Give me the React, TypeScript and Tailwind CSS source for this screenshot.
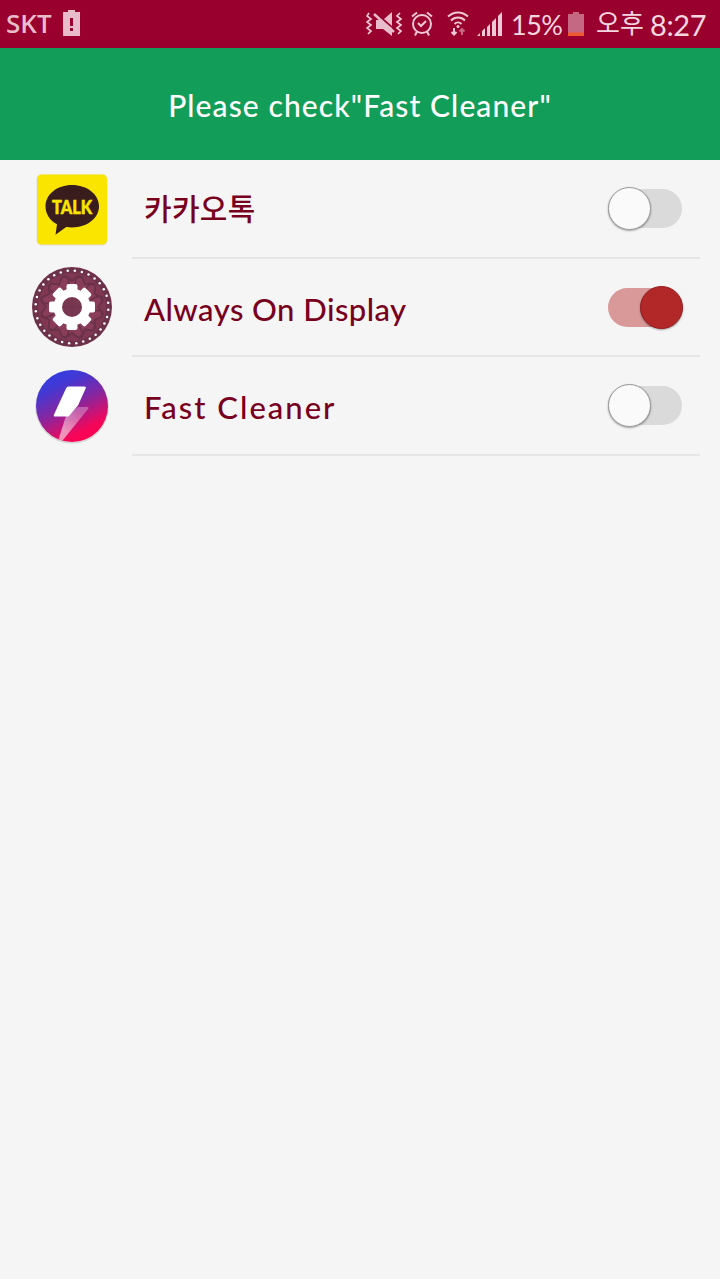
import React from 'react';

interface AppItem {
  name: string;
  icon: React.ReactNode;
  enabled: boolean;
  rowClass: string;
  nameClass: string;
}

const TalkIcon = () => (
  <svg width="80" height="80" viewBox="0 0 80 80">
    <rect x="4.5" y="5.5" width="71" height="71" rx="5" fill="#dedede" />
    <rect x="5" y="5.5" width="70" height="70" rx="4.5" fill="#fae500" />
    <path d="M40 16c15 0 27 9.300 27 21.300S55 58.500 40 58.500c-2 0-4-.2-5.800-.5L23.500 65.800 25 55.300C17.800 51.500 13.500 45 13.500 37.300 13.500 25.300 25 16 40 16z" fill="#391d1d" />
    <text x="40" y="44.500" textAnchor="middle" textLength="40" lengthAdjust="spacingAndGlyphs" fill="#fae500" stroke="#fae500" strokeWidth=".5" fontSize="18" className="font-['Lato',sans-serif] font-black">TALK</text>
  </svg>
);

const GearIcon = () => {
  const dots = Array.from({ length: 32 }, (_, i) => ((i + 0.4) * Math.PI) / 16);
  const teeth = [0, 45, 90, 135, 180, 225, 270, 315];
  const petals = [0, 30, 60, 90, 120, 150, 180, 210, 240, 270, 300, 330];
  return (
    <svg width="80" height="80" viewBox="0 0 80 80">
      <circle cx="40" cy="40" r="40" fill="#6d3249" />
      <circle cx="40" cy="40" r="34" fill="#803852" />
      {petals.map((a) => (
        <path key={a} d="M40 14l-7-5-4 4 3 7 8 5 8-5 3-7-4-4z" fill="#8a3d59" stroke="#693248" strokeWidth="1.800" transform={`rotate(${a} 40 40)`} />
      ))}
      {dots.map((a) => (
        <circle key={a} cx={40 + 36.4 * Math.cos(a)} cy={40 + 36.4 * Math.sin(a)} r="1.250" fill="#fff" />
      ))}
      {teeth.map((a) => (
        <path key={a} d="M34.500 25V19q0-2 2-2h7q2 0 2 2v6z" fill="#fff" transform={`rotate(${a} 40 40)`} />
      ))}
      <circle cx="40" cy="40" r="18.500" fill="#fff" />
      <circle cx="40" cy="40" r="10" fill="#793850" />
      <path d="M40 31v18M31 40h18M33.500 33.500l13 13M46.500 33.500l-13 13" stroke="#69324a" strokeWidth=".6" />
    </svg>
  );
};

const BoltIcon = () => (
  <svg width="80" height="80" viewBox="0 0 80 80">
    <defs>
      <linearGradient id="bolt-bg" x1="22" y1="5" x2="56" y2="75" gradientUnits="userSpaceOnUse">
        <stop offset="0" stopColor="#313ee5" />
        <stop offset=".2" stopColor="#4438d2" />
        <stop offset=".5" stopColor="#87269f" />
        <stop offset=".85" stopColor="#f50658" />
        <stop offset="1" stopColor="#ff0050" />
      </linearGradient>
      <linearGradient id="bolt-tail" x1="50" y1="48" x2="34" y2="66" gradientUnits="userSpaceOnUse">
        <stop offset="0" stopColor="#fff" stopOpacity=".3" />
        <stop offset="1" stopColor="#fff" stopOpacity=".55" />
      </linearGradient>
      <clipPath id="bolt-clip"><circle cx="40" cy="40" r="36" /></clipPath>
    </defs>
    <circle cx="40" cy="41" r="36.800" fill="#c5c5c5" opacity=".65" />
    <circle cx="40" cy="40" r="36" fill="url(#bolt-bg)" />
    <path d="M46 41h9q2.500 0 1 2L31 74l-6 4 9-28z" fill="url(#bolt-tail)" clipPath="url(#bolt-clip)" />
    <path d="M36.500 20.500h15.800q2.200 0 1.300 2L46 39.500l-9.500 11H23.300q-2.200 0-1.300-2l12-26q1-2 2.500-2z" fill="#fff" />
  </svg>
);

const items: AppItem[] = [
  { name: '카카오톡', icon: <TalkIcon />, enabled: false, rowClass: 'h-[99px]', nameClass: 'text-[30px] tracking-[0.300px] pb-0.5 font-medium' },
  { name: 'Always On Display', icon: <GearIcon />, enabled: true, rowClass: 'h-[98px]', nameClass: 'text-[31px] tracking-[0.450px] pt-1 font-medium' },
  { name: 'Fast Cleaner', icon: <BoltIcon />, enabled: false, rowClass: 'h-[99px]', nameClass: 'text-[31px] tracking-[2px] pt-1 font-medium' },
];

const StatusBar = () => (
  <div className="flex h-12 items-center justify-between bg-[#99002e] pl-1.5 pr-3 text-[#f5d7e0]">
    <div className="flex items-center gap-[11px] pb-0.5">
      <span className="w-[46px] whitespace-nowrap text-[26px] leading-none text-[#e8bccb] font-['Open_Sans',sans-serif] font-semibold">SKT</span>
      <svg width="17" height="26" viewBox="0 0 17 26" fill="#e8bccb">
        <path d="M5 0h7v2h5v24H0V2h5z" />
        <path d="M7 8h3v8H7zM7 18h3v3H7z" fill="#99002e" />
      </svg>
    </div>
    <div className="flex items-center">
      {/* Sound off */}
      <svg className="mr-2" width="37" height="26" viewBox="0 0 37 26" fill="none">
        <path d="M3 2l-2 3 4 3-4 3 4 3-4 3 4 3-3 3M34 2l-3 3 4 3-4 3 4 3-4 3 4 3-3 3" stroke="#efc9d5" strokeWidth="1.700" />
        <path d="M26 1v14l-8-7zM10 9h5l11 8v8l-9-7h-7z" fill="#e8bccb" />
        <path d="M8 3l20 18" stroke="#e8bccb" strokeWidth="2.500" />
      </svg>
      {/* Alarm */}
      <svg className="mr-3.5" width="22" height="26" viewBox="0 0 22 26" fill="none" stroke="#efc9d5" strokeWidth="2">
        <circle cx="11" cy="13" r="9" />
        <path d="M1 5.500l5-4M21 5.500l-5-4M6 20.500l-2 4M16 20.500l2 4M7 12l3 3 5-5" />
      </svg>
      {/* Wi-Fi with traffic arrows */}
      <svg className="mr-2" width="22" height="26" viewBox="0 0 22 26" fill="none" stroke="#efc9d5" strokeWidth="2">
        <path d="M1 5.500c6-5.500 14-5.500 20 0M4 9.500c4-4 10-4 14 0M7.500 13c2-2 5-2 7 0" />
        <circle cx="11" cy="15.500" r="1.500" fill="#efc9d5" stroke="none" />
        <path d="M7 17v6M4.500 21L7 23.500 9.500 21" />
        <path d="M15 24v-6M12.500 20.500L15 18l2.500 2.500" stroke="#c46883" />
      </svg>
      {/* Mobile signal */}
      <svg className="mr-[9px]" width="25" height="24" viewBox="0 0 25 24" fill="#efc9d5">
        <path d="M21 4l4-4v24h-4zM15 10l4-4v18h-4zM10 15l3-3v12h-3zM5 19l3-3v8H5zM0 24l3-3v3z" />
      </svg>
      <span className="w-[50px] whitespace-nowrap text-[27px] leading-none tracking-[-0.500px] font-['Lato',sans-serif]">15%</span>
      <svg className="ml-[7px] mr-3" width="16" height="24" viewBox="0 0 16 24">
        <path d="M5 0h6v2h5v22H0V2h5z" fill="#c46883" />
        <path d="M0 20.500h16V24H0z" fill="#f05a31" />
      </svg>
      <span className="w-[47px] whitespace-nowrap pb-1 text-[26px] leading-none font-['Noto_Sans_CJK_KR',sans-serif]">오후</span>
      <span className="ml-[7px] w-[58px] whitespace-nowrap text-[29px] leading-none tracking-[-0.400px] font-['Lato',sans-serif]">8:27</span>
    </div>
  </div>
);

const Toggle = ({ enabled }: { enabled: boolean }) => (
  <button
    type="button"
    role="switch"
    aria-checked={enabled}
    className={`flex h-[39px] w-[74px] shrink-0 items-center rounded-full ${enabled ? 'justify-end bg-[#d99999]' : 'bg-[#dadada]'}`}
  >
    <span
      className={`h-[43px] w-[43px] shrink-0 rounded-full border shadow-[0_1px_2px_rgba(0,0,0,0.35)] ${enabled ? '-mr-px border-[#951c21] bg-[#b22727]' : 'border-[#999] bg-[#fafafa]'}`}
    />
  </button>
);

export default function App() {
  return (
    <div className="flex min-h-[1279px] w-[720px] flex-col bg-[#f5f5f5] font-['Lato','Noto_Sans_CJK_KR',sans-serif]">
      <StatusBar />
      <header className="flex h-28 items-center justify-center bg-[#129e59] pt-0.5 text-white">
        <h1 className="whitespace-nowrap text-[30px] font-medium leading-none tracking-[1.100px]">Please check"Fast Cleaner"</h1>
      </header>
      <main>
        {items.map((item) => (
          <div key={item.name} className={`flex pl-8 pr-5 ${item.rowClass}`}>
            <div className="mr-5 flex w-20 items-center justify-center pb-0.5">{item.icon}</div>
            <div className="flex flex-1 items-center justify-between border-b-2 border-[#e6e6e6] pl-3 pr-[18px]">
              <span className={`whitespace-nowrap leading-none text-[#78001f] ${item.nameClass}`}>{item.name}</span>
              <Toggle enabled={item.enabled} />
            </div>
          </div>
        ))}
      </main>
    </div>
  );
}
